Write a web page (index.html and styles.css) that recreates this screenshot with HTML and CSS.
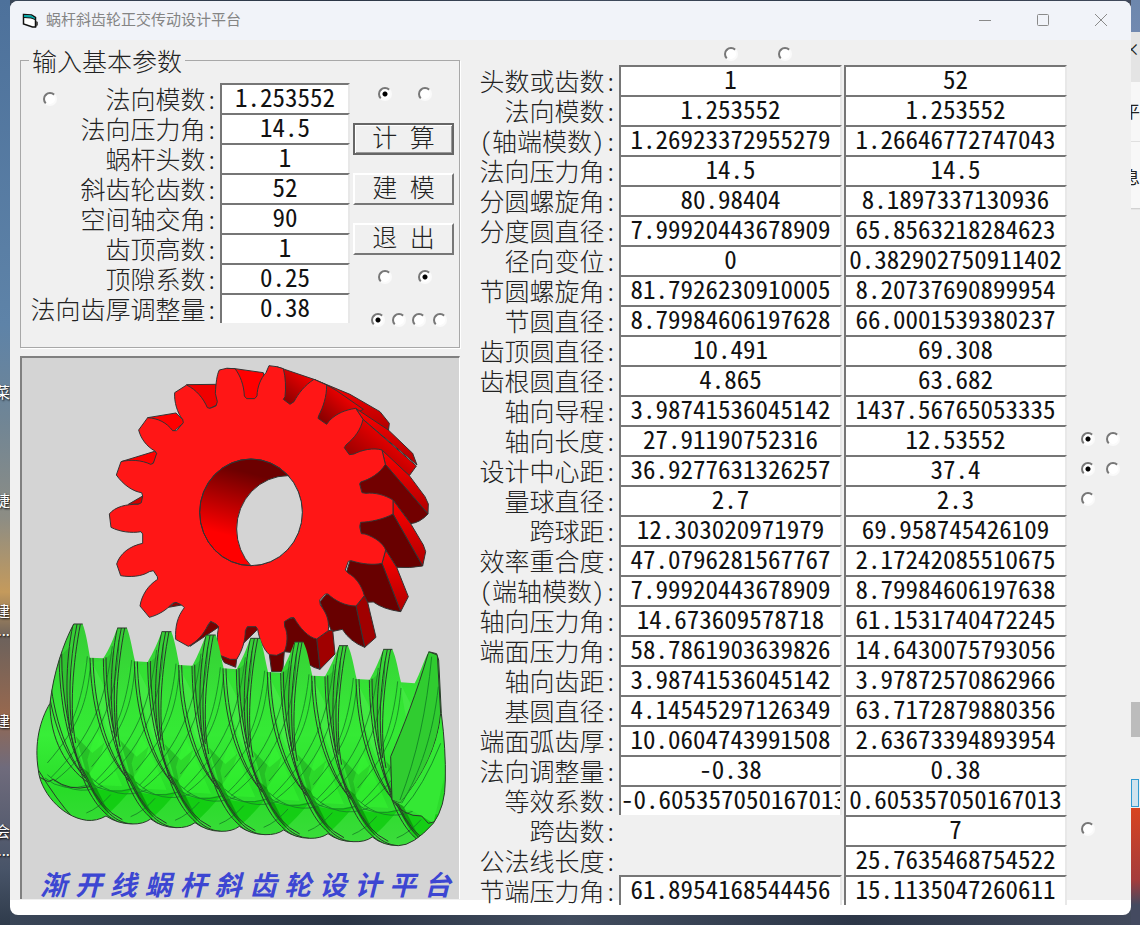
FILE: index.html
```html
<!DOCTYPE html>
<html lang="zh-CN">
<head>
  <meta charset="UTF-8">
  <meta name="viewport" content="width=device-width, initial-scale=1.0">
  <title>蜗杆斜齿轮正交传动设计平台</title>
  <link rel="stylesheet" href="styles.css">
</head>
<body>
  <!-- Desktop icons peeking out on the left -->
  <div class="desktop-left">
    <span class="icon-text" style="top: 383px">菜</span>
    <span class="icon-text" style="top: 491px">捷</span>
    <span class="icon-text" style="top: 602px">建</span>
    <span class="icon-text" style="top: 621px">...</span>
    <span class="icon-text" style="top: 712px">建</span>
    <span class="icon-text" style="top: 822px">会</span>
    <span class="icon-text" style="top: 841px">...</span>
  </div>

  <div class="window">
    <div class="titlebar">
      <svg class="app-icon" width="17" height="16" viewBox="0 0 17 16">
        <path d="M11 4l3 4 2 1v3l-2 2h-3z" fill="#555"/>
        <path d="M1.500 1.500l8 .5 4 2.500v9.500l-3 0-9-3z" fill="#fff" stroke="#111" stroke-width="1.500"/>
        <path d="M2 2l7.500.5 3.500 2.500v1.500l-4-1.500-7-.5z" fill="#0aa"/>
        <path d="M2 4.500l7 .5 4 1.500" fill="none" stroke="#111"/>
      </svg>
      <span class="title">蜗杆斜齿轮正交传动设计平台</span>
      <div class="window-buttons">
        <button aria-label="最小化"><svg width="14" height="14"><path d="M1 7.500h12"/></svg></button>
        <button aria-label="最大化"><svg width="14" height="14"><rect x="1.500" y="1.500" width="11" height="11" rx="1"/></svg></button>
        <button aria-label="关闭"><svg width="14" height="14"><path d="M1 1l12 12M13 1L1 13"/></svg></button>
      </div>
    </div>

    <div class="client">
      <div class="left">
        <!-- Basic parameters -->
        <fieldset class="params">
          <legend>输入基本参数</legend>
          <input type="radio" class="lone-radio" name="r0" aria-label="模数">
          <div class="param-rows">
            <label for="p1">法向模数:</label><input type="text" id="p1" value="1.253552">
            <label for="p2">法向压力角:</label><input type="text" id="p2" value="14.5">
            <label for="p3">蜗杆头数:</label><input type="text" id="p3" value="1">
            <label for="p4">斜齿轮齿数:</label><input type="text" id="p4" value="52">
            <label for="p5">空间轴交角:</label><input type="text" id="p5" value="90">
            <label for="p6">齿顶高数:</label><input type="text" id="p6" value="1">
            <label for="p7">顶隙系数:</label><input type="text" id="p7" value="0.25">
            <label for="p8">法向齿厚调整量:</label><input type="text" id="p8" value="0.38">
          </div>
          <div class="actions">
            <div class="radio-pair">
              <input type="radio" name="r1" aria-label="右旋" checked>
              <input type="radio" name="r1" aria-label="左旋">
            </div>
            <button class="cmd default">计 算</button>
            <button class="cmd">建 模</button>
            <button class="cmd">退 出</button>
            <div class="radio-pair">
              <input type="radio" name="r2" aria-label="外啮合">
              <input type="radio" name="r2" aria-label="内啮合" checked>
            </div>
            <div class="radio-four">
              <input type="radio" name="r3" aria-label="一" checked>
              <input type="radio" name="r3" aria-label="二">
              <input type="radio" name="r3" aria-label="三">
              <input type="radio" name="r3" aria-label="四">
            </div>
          </div>
        </fieldset>

        <!-- Gear and worm drawing -->
        <div class="picture">
          <svg class="gear-pair" viewBox="22 358 437 541">
            <defs>
              <linearGradient id="bore" x1="0.6" y1="0" x2="0.35" y2="1">
                <stop offset="0.15" stop-color="#6c0000"/>
                <stop offset="0.75" stop-color="#ff0000"/>
              </linearGradient>
              <linearGradient id="flank" x1="1" y1="0" x2="0" y2="1">
                <stop offset="0.3" stop-color="#f00000"/>
                <stop offset="1" stop-color="#700000"/>
              </linearGradient>
              <linearGradient id="tip" x1="0" y1="0" x2="0" y2="1">
                <stop offset="0" stop-color="#ff0000"/>
                <stop offset="1" stop-color="#b00000"/>
              </linearGradient>
              <linearGradient id="wormfill" x1="0" y1="0" x2="0" y2="1">
                <stop offset="0" stop-color="#35cc35"/>
                <stop offset="0.5" stop-color="#38ee38"/>
                <stop offset="0.75" stop-color="#28dc28"/>
                <stop offset="1" stop-color="#3cdc3c"/>
              </linearGradient>
              <clipPath id="holeclip"><ellipse cx="483" cy="487" rx="154" ry="160"/></clipPath>
              <clipPath id="wormclip"><use href="#wormshape"/></clipPath>
              <path id="wormshape" d="M161,72 L188,72 C198,100 203,130 210,173 L250,175 C270,145 280,115 292,84 L321,84 C331,110 336,145 345,184 L383,186 C400,158 414,125 425,95 L454,95 C464,120 470,155 478,195 L517,197 C535,165 546,135 558,105 L587,105 C597,130 602,166 611,205 L650,208 C668,176 680,145 691,115 L720,115 C730,142 735,177 744,216 L783,218 C800,188 812,157 824,126 L850,126 C863,152 868,188 877,227 L915,229 C932,200 945,170 957,137 L984,137 C996,163 1001,198 1010,237 L1049,239 C1066,210 1078,180 1090,148 L1117,148 C1129,174 1134,209 1143,247 L1184,250 C1200,220 1212,180 1226,155 L1250,161 L1256,180 L1264,340 Q1278,450 1276,540 Q1276,620 1240,670 Q1180,737 1135,737 Q1090,737 1057,711 Q1035,727 1000,725 Q957,725 924,701 Q902,716 868,715 Q825,714 791,690 Q770,705 735,704 Q692,703 658,679 Q637,695 602,694 Q559,693 525,668 Q503,684 468,683 Q425,682 392,657 Q370,673 335,672 Q292,671 258,648 Q230,664 200,661 C120,650 60,570 55,510 C42,430 60,360 90,310 C100,220 130,130 161,72 Z"/>
              <g id="turn">
                <path d="M252,180 C262,330 280,430 330,540 C290,420 278,300 285,150z" fill="#1c7a1c" opacity="0.250"/>
                <path d="M325,200 C320,300 295,370 285,420 L330,520 Q410,380 400,190z" fill="#32e632" opacity="0.500"/>
                <path d="M345,190 C355,300 390,400 430,470 L380,260z" fill="#58f058" opacity="0.400"/>
                <path d="M300,420 L335,540 Q380,480 385,440 L350,470z" fill="#157a15" opacity="0.350"/>
                <path d="M362,400 L335,490 L350,565 L440,570 L400,480z" fill="#38ff32" opacity="0.400"/>
                <path d="M345,572 Q400,592 470,575 Q430,625 392,657 Q365,625 345,572z" fill="#08c808" opacity="0.700"/>
                <path d="M315,510 L340,530 Q375,600 400,650 Q350,610 315,510z" fill="#077f07" opacity="0.600"/>
                <g fill="none" stroke="#187f26" stroke-width="2.500">
                  <path d="M335,180 C325,280 300,360 275,400"/>
                  <path d="M345,200 C335,320 310,390 215,500"/>
                  <path d="M410,150 C390,310 350,420 225,545"/>
                  <path d="M430,130 C425,320 360,460 235,555"/>
                  <path d="M208,545 Q260,590 345,565"/>
                  <path d="M215,535 Q290,605 380,570"/>
                  <path d="M332,650 Q370,635 405,595"/>
                </g>
                <g fill="none" stroke="#2a392a" stroke-width="3">
                  <path d="M210,173 C213,310 245,450 325,540"/>
                  <path d="M219,173 C222,310 255,450 328,545"/>
                  <path d="M250,175 C252,320 275,440 330,545 C370,625 410,680 470,683"/>
                  <path d="M258,172 C258,310 285,430 320,540 C350,620 390,660 430,678"/>
                  <path d="M292,84 C268,200 270,330 285,410 Q300,490 335,545 Q375,640 440,670"/>
                  <path d="M304,84 C280,200 278,320 290,410"/>
                  <path d="M314,84 C292,200 280,340 300,440"/>
                </g>
              </g>
            </defs>

            <g transform="translate(90 350) scale(0.33333)" stroke="#333" stroke-width="3" stroke-linejoin="round">
              <!-- flanks behind the front face -->
              <path fill="#ff0000" d="M410,55 L435,56 L520,68 L535,150 L460,150z"/>
              <path fill="#f00000" d="M290,104 L377,103 L390,160 L350,180z"/>
              <path fill="#ff0000" d="M173,203 L258,189 L285,215 L250,245z"/>
              <path fill="#ff0000" d="M93,335 L194,304 L205,315 L185,345z"/>
              <path fill="#d00000" d="M115,463 L158,438 L158,462z"/>
              <path fill="url(#flank)" d="M560,50 L672,88 L710,105 L640,170 L580,160z"/>
              <path fill="url(#tip)" d="M672,88 L780,133 L870,185 L898,220 L895,245 L819,208 L797,175z"/>
              <path fill="url(#flank)" d="M710,105 L740,122 L820,178 L720,230 L680,205z"/>
              <path fill="url(#tip)" d="M797,175 L895,240 L968,310 L981,345 L819,208z"/>
              <path fill="url(#flank)" d="M819,208 L979,348 L958,377 L876,305 L778,320 L760,290z"/>
              <path fill="url(#tip)" d="M876,300 L958,377 L1005,440 L1015,462 L1014,492 L886,343z"/>
              <path fill="#720000" d="M886,343 L1014,492 Q990,518 962,521 L909,450 L816,430 L808,400z"/>
              <path fill="url(#tip)" d="M909,450 L962,521 L1000,585 L1007,605 L998,648 L909,492z"/>
              <path fill="#680000" d="M909,492 L998,648 Q960,655 920,652 L887,600 L812,552 L809,517z"/>
              <path fill="url(#tip)" d="M887,600 L920,652 L955,740 L932,785 L876,640z"/>
              <path fill="#680000" d="M876,640 L932,785 Q880,778 850,756 L823,757 L770,665 L780,632z"/>
              <path fill="#a00000" d="M823,737 L833,757 L858,862 L824,892 L798,768z"/>
              <path fill="#680000" d="M798,768 L824,892 Q780,875 757,838 L725,845 L690,755 L710,732z"/>
              <path fill="#a00000" d="M715,842 L728,840 L735,912 L690,958 L680,867z"/>
              <path fill="#680000" d="M680,867 L690,958 Q650,950 630,910 L583,905 L583,810 L610,803z"/>
              <path fill="#680000" d="M538,914 L583,905 L578,965 L545,965z"/>
              <path fill="#780000" d="M503,838 L498,830 L472,830 L466,842 L440,928 L437,952 L403,938 L390,916 L440,900z"/>
              <path fill="#780000" d="M388,830 L378,822 L362,814 L345,840 L300,889z"/>
              <path fill="#900000" d="M275,765 L258,755 L235,772z"/>
              <!-- front face -->
              <path fill="#ff1616" d="M382,155 L376,130 C378,100 380,75 388,60 L410,55 L435,56 C450,75 462,105 463,138 L470,146 L494,146 L501,138 C502,110 512,85 528,68 L537,47 L560,50 L580,56 C587,80 588,115 585,140 L580,148 L600,163 L612,155 C625,130 645,105 672,88 L710,105 C710,140 700,170 686,197 L684,205 L710,223 L718,212 C740,190 765,180 797,175 L819,208 C812,240 795,262 768,285 L763,293 L778,314 L792,312 C815,300 850,292 876,300 L886,343 C870,370 840,388 812,396 L809,402 L816,428 L828,430 C855,427 885,435 909,450 L909,492 C880,508 840,516 812,517 L809,530 L814,551 L825,552 C855,562 880,580 887,600 L876,640 C850,646 815,642 783,632 L775,634 L766,660 L775,670 C795,680 815,705 823,737 L798,768 C765,768 735,752 714,732 L706,732 L689,750 L691,765 C710,790 718,810 715,842 L680,867 C655,862 630,835 612,803 L602,803 L583,815 L584,830 C595,850 592,885 583,905 L560,916 L538,914 C522,900 508,870 503,838 L498,830 L472,830 L466,842 C466,870 458,900 440,928 L420,928 L390,916 C380,890 380,860 386,830 L378,822 L362,814 L354,825 C340,855 320,875 295,889 L257,868 C255,830 262,800 283,773 L275,765 L258,757 L247,760 C230,780 205,795 178,802 L150,768 C155,735 175,705 203,688 L202,680 L190,662 L178,665 C155,680 120,682 92,677 L80,642 C90,610 120,588 158,580 L158,552 L153,545 C125,550 90,546 63,532 L58,492 C75,470 110,462 145,463 L154,458 L158,438 L155,428 C130,425 100,405 79,375 L93,335 C120,328 155,330 182,343 L190,340 L200,310 L195,303 C170,290 152,265 146,240 L173,203 C205,205 230,218 248,242 L260,242 L280,218 L278,208 C262,190 252,155 254,128 L290,105 C320,120 340,145 352,173 L360,175 L378,168 Z"/>
              <ellipse cx="483" cy="487" rx="154" ry="160" fill="url(#bore)"/>
              <ellipse cx="594" cy="537" rx="154" ry="160" fill="#d4d4d4" clip-path="url(#holeclip)"/>
              <ellipse cx="483" cy="487" rx="154" ry="160" fill="none"/>
            </g>

            <g transform="translate(20 600) scale(0.33333)">
              <use href="#wormshape" fill="url(#wormfill)"/>
              <g clip-path="url(#wormclip)">
                <use href="#turn" x="-133" y="-11"/>
                <use href="#turn"/>
                <use href="#turn" x="133" y="11"/>
                <use href="#turn" x="266" y="22"/>
                <use href="#turn" x="399" y="32"/>
                <use href="#turn" x="532" y="43"/>
                <use href="#turn" x="665" y="54"/>
                <use href="#turn" x="798" y="64"/>
                <path d="M90,310 C90,420 140,500 200,545 M55,510 Q110,600 160,655 M55,530 L85,545 L100,538 Q150,575 210,560" fill="none" stroke="#2a392a" stroke-width="3"/>
                <path d="M1226,155 C1190,280 1150,380 1112,470 L1116,600 L1140,610 Q1250,480 1262,340 L1252,165z" fill="#30cc30" stroke="#2a392a" stroke-width="3"/>
                <path d="M1116,600 L1140,610 Q1250,480 1264,340 L1280,500 L1240,670 L1205,648z" fill="#34e834"/>
                <path d="M1235,170 C1220,330 1190,470 1140,600 M1255,260 C1240,400 1200,520 1145,610 M1262,430 Q1210,560 1150,625" fill="none" stroke="#168c26" stroke-width="3"/>
                <path d="M1116,600 Q1150,650 1205,648 L1225,670 L1245,665" fill="none" stroke="#2a392a" stroke-width="3"/>
              </g>
              <path d="M292,84 L321,84 M425,95 L454,95 M558,105 L587,105 M691,115 L720,115 M824,126 L850,126 M957,137 L984,137 M1090,148 L1117,148 M1226,155 L1250,161 L1256,180 L1264,340 Q1278,450 1276,540 Q1276,620 1240,670 Q1180,737 1135,737 Q1090,737 1057,711 Q1035,727 1000,725 Q957,725 924,701 Q902,716 868,715 Q825,714 791,690 Q770,705 735,704 Q692,703 658,679 Q637,695 602,694 Q559,693 525,668 Q503,684 468,683 Q425,682 392,657 Q370,673 335,672 Q292,671 258,648 Q230,664 200,661 C120,650 60,570 55,510 C42,430 60,360 90,310 C100,220 130,130 161,72 L188,72" fill="none" stroke="#2a392a" stroke-width="3"/>
            </g>
          </svg>
          <div class="caption">
            <span>渐</span><span>开</span><span>线</span><span>蜗</span><span>杆</span><span>斜</span><span>齿</span><span>轮</span><span>设</span><span>计</span><span>平</span><span>台</span>
          </div>
        </div>
      </div>

      <!-- Results -->
      <div class="results">
        <div class="top-radios">
          <input type="radio" name="r4" aria-label="蜗杆">
          <input type="radio" name="r4" aria-label="斜齿轮">
        </div>
        <div class="row"><label for="a1">头数或齿数:</label><input type="text" id="a1" value="1"><input type="text" aria-label="齿数" value="52"></div>
        <div class="row"><label for="a2">法向模数:</label><input type="text" id="a2" value="1.253552"><input type="text" aria-label="法向模数" value="1.253552"></div>
        <div class="row"><label for="a3">(轴端模数):</label><input type="text" id="a3" value="1.26923372955279"><input type="text" aria-label="端面模数" value="1.26646772747043"></div>
        <div class="row"><label for="a4">法向压力角:</label><input type="text" id="a4" value="14.5"><input type="text" aria-label="法向压力角" value="14.5"></div>
        <div class="row"><label for="a5">分圆螺旋角:</label><input type="text" id="a5" value="80.98404"><input type="text" aria-label="分圆螺旋角" value="8.1897337130936"></div>
        <div class="row"><label for="a6">分度圆直径:</label><input type="text" id="a6" value="7.99920443678909"><input type="text" aria-label="分度圆直径" value="65.8563218284623"></div>
        <div class="row"><label for="a7">径向变位:</label><input type="text" id="a7" value="0"><input type="text" aria-label="径向变位" value="0.382902750911402"></div>
        <div class="row"><label for="a8">节圆螺旋角:</label><input type="text" id="a8" value="81.7926230910005"><input type="text" aria-label="节圆螺旋角" value="8.20737690899954"></div>
        <div class="row"><label for="a9">节圆直径:</label><input type="text" id="a9" value="8.79984606197628"><input type="text" aria-label="节圆直径" value="66.0001539380237"></div>
        <div class="row"><label for="a10">齿顶圆直径:</label><input type="text" id="a10" value="10.491"><input type="text" aria-label="齿顶圆直径" value="69.308"></div>
        <div class="row"><label for="a11">齿根圆直径:</label><input type="text" id="a11" value="4.865"><input type="text" aria-label="齿根圆直径" value="63.682"></div>
        <div class="row"><label for="a12">轴向导程:</label><input type="text" id="a12" value="3.98741536045142"><input type="text" aria-label="轴向导程" value="1437.56765053335"></div>
        <div class="row"><label for="a13">轴向长度:</label><input type="text" id="a13" value="27.91190752316"><input type="text" aria-label="轴向长度" value="12.53552"><span class="side"><input type="radio" name="r5" aria-label="长度一" checked><input type="radio" name="r5" aria-label="长度二"></span></div>
        <div class="row"><label for="a14">设计中心距:</label><input type="text" id="a14" value="36.9277631326257"><input type="text" aria-label="设计中心距" value="37.4"><span class="side"><input type="radio" name="r6" aria-label="中心距一" checked><input type="radio" name="r6" aria-label="中心距二"></span></div>
        <div class="row"><label for="a15">量球直径:</label><input type="text" id="a15" value="2.7"><input type="text" aria-label="量球直径" value="2.3"><span class="side"><input type="radio" name="r7" aria-label="量球"></span></div>
        <div class="row"><label for="a16">跨球距:</label><input type="text" id="a16" value="12.303020971979"><input type="text" aria-label="跨球距" value="69.958745426109"></div>
        <div class="row"><label for="a17">效率重合度:</label><input type="text" id="a17" value="47.0796281567767"><input type="text" aria-label="重合度" value="2.17242085510675"></div>
        <div class="row"><label for="a18">(端轴模数):</label><input type="text" id="a18" value="7.99920443678909"><input type="text" aria-label="轴向模数" value="8.79984606197638"></div>
        <div class="row"><label for="a19">轴向压力角:</label><input type="text" id="a19" value="14.673609578718"><input type="text" aria-label="轴向压力角" value="61.1531740472245"></div>
        <div class="row"><label for="a20">端面压力角:</label><input type="text" id="a20" value="58.7861903639826"><input type="text" aria-label="端面压力角" value="14.6430075793056"></div>
        <div class="row"><label for="a21">轴向齿距:</label><input type="text" id="a21" value="3.98741536045142"><input type="text" aria-label="轴向齿距" value="3.97872570862966"></div>
        <div class="row"><label for="a22">基圆直径:</label><input type="text" id="a22" value="4.14545297126349"><input type="text" aria-label="基圆直径" value="63.7172879880356"></div>
        <div class="row"><label for="a23">端面弧齿厚:</label><input type="text" id="a23" value="10.0604743991508"><input type="text" aria-label="端面弧齿厚" value="2.63673394893954"></div>
        <div class="row"><label for="a24">法向调整量:</label><input type="text" id="a24" value="-0.38"><input type="text" aria-label="法向调整量" value="0.38"></div>
        <div class="row"><label for="a25">等效系数:</label><input type="text" id="a25" value="-0.605357050167013"><input type="text" aria-label="等效系数" value="0.605357050167013"></div>
        <div class="row"><label for="a26">跨齿数:</label><input type="text" id="a26" class="second" value="7"><span class="side"><input type="radio" name="r8" aria-label="跨齿"></span></div>
        <div class="row"><label for="a27">公法线长度:</label><input type="text" id="a27" class="second" value="25.7635468754522"></div>
        <div class="row"><label for="a28">节端压力角:</label><input type="text" id="a28" value="61.8954168544456"><input type="text" aria-label="节端压力角" value="15.1135047260611"></div>
      </div>
    </div>
  </div>

  <!-- Window behind, on the right -->
  <div class="desktop-right">
    <div class="behind">
      <span class="behind-text" style="top: 40px">×</span>
      <span class="behind-text" style="top: 102px">平</span>
      <span class="behind-text" style="top: 168px">息</span>
      <span class="behind-scroll"></span>
      <span class="behind-list"></span>
    </div>
  </div>
</body>
</html>
```
FILE: styles.css
```css
* {
  box-sizing: border-box;
}

body {
  margin: 0;
  min-height: 100vh;
  display: flex;
  align-items: stretch;
  font-family: "Noto Sans CJK SC", sans-serif;
  background: linear-gradient(to right, #3a4658, #2b3545 30%, #414c5e 50%, #2d3748 75%, #424a5c);
}

.desktop-left {
  position: relative;
  width: 10px;
  overflow: hidden;
  background: linear-gradient(#4d719b, #5e83a8 35%, #6f8596 45%, #8d8d84 56%, #c49a5c 64%, #6d625c 69%, #96684f 77%, #6f6b7c 83%, #485468 94%, #2f3b4b);
}

.icon-text {
  position: absolute;
  right: 0;
  font-size: 15px;
  line-height: 18px;
  color: #fff;
  text-shadow: 1px 1px 2px #000;
}

.desktop-right {
  width: 9px;
  background: linear-gradient(#6d87ad 0, #7189b0 32px, #eee 32px, #eee 808px, #d84420 808px, #a43c3c 880px, #444a60 905px);
}

.behind {
  position: relative;
  height: 808px;
  overflow: hidden;
  background: linear-gradient(transparent 32px, #e4e4e4 32px, #e4e4e4 82px, #f7f7f7 82px, #f7f7f7 141px, #c8c8c8 141px, #f8f8f8 142px, #f8f8f8 208px, #c8c8c8 208px, #f0f0f0 210px);
}

.behind-text {
  position: absolute;
  right: 0;
  font-size: 17px;
  line-height: 18px;
  color: #222;
}

.behind-scroll {
  position: absolute;
  top: 702px;
  width: 9px;
  height: 35px;
  background: #bcbcbc;
}

.behind-list {
  position: absolute;
  top: 779px;
  width: 8px;
  height: 28px;
  border: 1px solid #2f9ad0;
  background: #cfe3ee;
}

/* Window */
.window {
  flex: 1;
  min-width: 0;
  margin: 1px 0 10px;
  border-radius: 8px;
  background: #fff;
  overflow: hidden;
}

.titlebar {
  display: flex;
  align-items: center;
  height: 39px;
  padding-left: 12px;
  background: #f1f3f9;
}

.title {
  margin-left: 7px;
  padding-bottom: 4px;
  font-size: 15px;
  line-height: 32px;
  color: #848484;
}

.window-buttons {
  display: flex;
  margin-left: auto;
  padding: 0 1px 2px 0;
}

.window-buttons button {
  width: 58px;
  height: 37px;
  padding: 0;
  border: none;
  background: none;
}

.window-buttons svg {
  display: block;
  margin: auto;
  fill: none;
  stroke: #8a8a8a;
}

.client {
  display: flex;
  align-items: flex-start;
  height: 860px;
  background: #f0f0f0;
}

.left {
  flex: 1;
  min-width: 0;
  padding: 6px 0 0 10px;
}

/* Text and fields */
label,
legend,
.cmd {
  font-size: 25px;
  font-weight: 300;
  line-height: 30px;
  color: #222;
  font-feature-settings: "hwid";
}

label {
  text-align: right;
  white-space: nowrap;
}

input[type="text"] {
  width: 100%;
  height: 30px;
  padding: 0 0 6px;
  border: 2px solid #767676;
  border-right-color: #e8e8e8;
  border-bottom: none;
  background: #fff;
  font-family: "Noto Sans CJK SC", sans-serif;
  font-size: 25px;
  line-height: 22px;
  font-feature-settings: "hwid";
  text-align: center;
  color: #111;
  border-radius: 0;
}

input[type="radio"] {
  appearance: none;
  width: 14px;
  height: 14px;
  margin: 0;
  border: 2px solid #777;
  border-right-color: #fafafa;
  border-bottom-color: #fafafa;
  border-radius: 50%;
  background: #fff;
}

input[type="radio"]:checked {
  background: radial-gradient(circle, #000 2px, #fff 3px);
}

/* Parameter frame */
.params {
  position: relative;
  display: flex;
  width: 440px;
  height: 302px;
  margin: 0;
  padding: 8px 5px 0 0;
  border: 1px solid #a8a8a8;
  box-shadow: 1px 1px 0 #fff;
}

.params legend {
  margin-left: 8px;
  padding: 0 3px;
  line-height: 28px;
}

.lone-radio {
  position: absolute;
  left: 22px;
  top: 18px;
}

.param-rows {
  flex: 1;
  display: grid;
  grid-template-columns: 1fr 130px;
  grid-auto-rows: 30px;
  column-gap: 2px;
  padding-top: 1px;
}

.actions {
  width: 104px;
  padding: 5px 0 0 3px;
  display: flex;
  flex-direction: column;
}

.radio-pair {
  display: flex;
  gap: 26px;
  padding-left: 25px;
}

.radio-four {
  display: flex;
  justify-content: space-between;
  padding: 29px 7px 0 18px;
}

.cmd {
  height: 32px;
  margin-top: 18px;
  padding: 0 0 6px;
  border: 2px solid;
  border-color: #fff #777 #777 #fff;
  background: #f0f0f0;
  line-height: 22px;
  font-family: "Noto Sans CJK SC", sans-serif;
}

.cmd.default {
  margin-top: 22px;
  border-color: #666;
  box-shadow: inset 1px 1px 0 #fff, inset -1px -1px 0 #999;
}

.cmd + .radio-pair {
  margin-top: 15px;
}

/* Picture */
.picture {
  position: relative;
  width: 440px;
  margin-top: 8px;
  border-top: 2px solid #808080;
  border-left: 2px solid #808080;
  border-right: 1px solid #fff;
  background: #d4d4d4;
}

.gear-pair {
  display: block;
  width: 100%;
}

.caption {
  position: absolute;
  left: 18px;
  right: 8px;
  bottom: 0;
  display: flex;
  justify-content: space-between;
  font-size: 27px;
  font-weight: 700;
  font-style: italic;
  line-height: 30px;
  color: #3c46d2;
}

/* Results */
.results {
  width: 660px;
  padding-top: 5px;
}

.top-radios {
  display: flex;
  gap: 40px;
  height: 20px;
  padding: 2px 0 0 253px;
}

.row {
  display: grid;
  grid-template-columns: 146px 223px 223px 1fr;
  column-gap: 2px;
  height: 30px;
}

.row .second {
  grid-column: 3;
}

.side {
  display: flex;
  gap: 11px;
  padding: 7px 0 0 12px;
}
```
